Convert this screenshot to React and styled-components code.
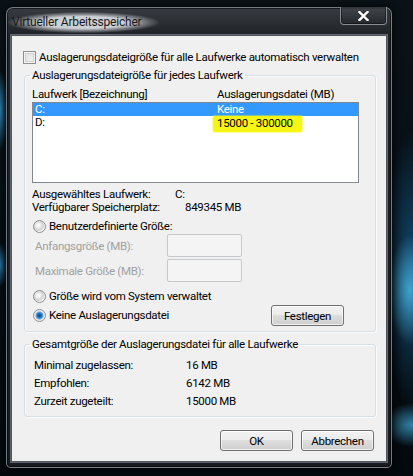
import React from 'react';
import styled, { createGlobalStyle } from 'styled-components';

const GlobalStyle = createGlobalStyle`
  html, body { margin: 0; padding: 0; }
  body {
    width: 413px;
    height: 476px;
    overflow: hidden;
    font-family: Roboto, "Liberation Sans", sans-serif;
    background:
      radial-gradient(ellipse 22px 55px at 410px 290px, rgba(70,180,225,0.85), rgba(70,180,225,0) 100%),
      radial-gradient(ellipse 30px 22px at 412px 425px, rgba(60,160,205,0.8), rgba(60,160,205,0) 100%),
      radial-gradient(ellipse 28px 140px at 412px 270px, rgba(25,100,150,0.7), rgba(25,100,150,0) 100%),
      radial-gradient(ellipse 8px 40px at 0px 110px, rgba(50,150,210,0.85), rgba(50,150,210,0) 100%),
      radial-gradient(ellipse 8px 22px at 0px 265px, rgba(50,150,210,0.75), rgba(50,150,210,0) 100%),
      linear-gradient(180deg, #0b1217 0%, #061017 40%, #04090d 100%);
  }
`;

const Window = styled.div`
  box-sizing: border-box;
  margin: 7px 0 0 6px;
  width: 386px;
  height: 461px;
  padding: 0 4px 5px 4px;
  display: flex;
  flex-direction: column;
  border: 1px solid rgba(140, 148, 156, 0.8);
  border-radius: 7px 7px 5px 5px;
  background: linear-gradient(180deg, rgba(58, 63, 68, 0.95) 0%, rgba(32, 36, 40, 0.95) 28px, rgba(24, 28, 32, 0.95) 100%);
  box-shadow: inset 0 0 0 1px rgba(0, 0, 0, 0.55), 0 0 8px rgba(0, 0, 0, 0.9);
`;

const TitleBar = styled.div`
  height: 27px;
  display: flex;
  justify-content: space-between;
  align-items: flex-start;
`;

const Title = styled.span`
  margin: 4px 0 0 -3px;
  padding: 2px 18px 3px 4px;
  font-size: 12px;
  letter-spacing: -0.2px;
  line-height: 16px;
  color: #1a1a1a;
  background: radial-gradient(ellipse at 50% 50%, rgba(222, 226, 230, 0.9) 40%, rgba(222, 226, 230, 0) 72%);
`;

const CloseButton = styled.div`
  box-sizing: border-box;
  width: 47px;
  height: 18px;
  margin-top: -1px;
  display: flex;
  align-items: center;
  justify-content: center;
  border: 1px solid rgba(150, 156, 162, 0.85);
  border-top: none;
  border-radius: 0 0 4px 4px;
  background: linear-gradient(180deg, rgba(70, 75, 80, 0.7), rgba(35, 40, 45, 0.7));
  box-shadow: inset 0 0 0 1px rgba(0, 0, 0, 0.4);
`;

const Client = styled.div`
  flex: 1;
  display: flex;
  flex-direction: column;
  padding: 0 10px 0 12px;
  background: #f0f0f0;
  border: 1px solid #50565c;
  box-shadow: 0 0 0 1px rgba(180, 190, 200, 0.45);
  font-size: 11.5px;
  letter-spacing: -0.3px;
  color: #000;
`;

const CheckRow = styled.label`
  display: flex;
  align-items: center;
  height: 13px;
  margin: 15px 0 0 -1px;
  line-height: 13px;
  white-space: nowrap;
`;

const CheckBox = styled.span`
  box-sizing: border-box;
  flex: none;
  width: 13px;
  height: 13px;
  border: 1px solid #8e8f8f;
  background: linear-gradient(135deg, #dcdcdc 0%, #f6f6f6 100%);
  box-shadow: inset 0 0 0 1px #f4f4f4, inset 0 0 0 2px #d0d0d0;
  margin-right: 3px;
`;

const Group = styled.fieldset`
  margin: ${(p) => p.$top}px 0 0 0;
  padding: 0;
  min-width: 0;
  border: 1px solid #d5dfe5;
  border-radius: 3px;
  box-shadow: inset 1px 1px 0 #fbfbfb, 1px 1px 0 #fbfbfb;
`;

const Legend = styled.legend`
  margin-left: 5px;
  padding: 0 2px;
  line-height: 14px;
  white-space: nowrap;
`;

const GroupBody = styled.div`
  display: flex;
  flex-direction: column;
  padding: ${(p) => p.$pad};
  white-space: nowrap;
`;

const HeaderRow = styled.div`
  display: grid;
  grid-template-columns: 185px 1fr;
  line-height: 14px;
`;

const ListBox = styled.div`
  box-sizing: border-box;
  height: 81px;
  margin-top: 1px;
  border: 1px solid #828790;
  background: #fff;
`;

const ListRow = styled.div`
  display: grid;
  grid-template-columns: 182px 1fr;
  height: 13px;
  line-height: 13px;
  padding-left: 2px;
  background: ${(p) => (p.$selected ? '#3399ff' : 'transparent')};
  color: ${(p) => (p.$selected ? '#fff' : '#000')};
`;

const Marker = styled.span`
  display: inline-block;
  justify-self: start;
  margin-left: -4px;
  padding: 1px 9px 2px 4px;
  background: #f6f614;
  border-radius: 2px;
  box-shadow: 0 0 1px 1px rgba(246, 246, 20, 0.45);
`;

const InfoRow = styled.div`
  display: grid;
  grid-template-columns: 143px 1fr;
  line-height: 13px;
  margin-top: ${(p) => p.$top || 0}px;
`;

const InfoValue = styled.span`
  padding-left: ${(p) => p.$shift || 0}px;
`;

const RadioRow = styled.label`
  display: flex;
  align-items: center;
  height: ${(p) => p.$height || 13}px;
  margin: ${(p) => p.$top}px 0 0 1px;
  line-height: 13px;
`;

const Radio = styled.span`
  box-sizing: border-box;
  flex: none;
  width: 13px;
  height: 13px;
  margin-right: 3px;
  border-radius: 50%;
  border: 1px solid #8e8f8f;
  background: ${(p) =>
    p.$checked
      ? 'radial-gradient(circle at 50% 50%, #0e4a8c 0, #2a78c2 2.5px, #6fb2e8 3.6px, #e4e4e4 4.4px, #f5f5f5 6px)'
      : 'radial-gradient(circle at 40% 40%, #ffffff 0, #e6e6e6 3px, #cfcfcf 5px, #f3f3f3 6px)'};
`;

const SizeRow = styled.div`
  display: grid;
  grid-template-columns: 132px 75px;
  align-items: center;
  height: 23px;
  margin-top: ${(p) => p.$top}px;
  padding-left: 3px;
  color: #a0a0a0;
`;

const SizeInput = styled.div`
  box-sizing: border-box;
  height: 23px;
  border: 1px solid #c5c9cc;
  border-radius: 2px;
  background: #f4f4f4;
`;

const Spacer = styled.span`
  flex: 1;
`;

const Button = styled.button`
  box-sizing: border-box;
  width: 73px;
  height: 21px;
  padding: 0;
  margin-right: ${(p) => p.$right || 0}px;
  font-family: inherit;
  font-size: inherit;
  letter-spacing: inherit;
  color: #000;
  border: 1px solid #707070;
  border-radius: 3px;
  background: linear-gradient(180deg, #f2f2f2 0%, #ebebeb 50%, #dddddd 50%, #cfcfcf 100%);
  box-shadow: inset 0 0 0 1px rgba(255, 255, 255, 0.65);
`;

const TotalRow = styled.div`
  display: grid;
  grid-template-columns: 152px 1fr;
  height: 18px;
  line-height: 18px;
`;

const ButtonBar = styled.div`
  display: flex;
  justify-content: flex-end;
  gap: 8px;
  margin: 13px 2px 0 0;
`;

const totals = [
  ['Minimal zugelassen:', '16 MB'],
  ['Empfohlen:', '6142 MB'],
  ['Zurzeit zugeteilt:', '15000 MB'],
];

export default function App() {
  return (
    <>
      <GlobalStyle />
      <Window>
        <TitleBar>
          <Title>Virtueller Arbeitsspeicher</Title>
          <CloseButton>
            <svg width="11" height="10" viewBox="0 0 11 10">
              <path d="M1.5 1 L9.5 9 M9.5 1 L1.5 9" stroke="#2a2e33" strokeWidth="4" strokeLinecap="square" />
              <path d="M1.5 1 L9.5 9 M9.5 1 L1.5 9" stroke="#ffffff" strokeWidth="2.4" strokeLinecap="square" />
            </svg>
          </CloseButton>
        </TitleBar>
        <Client>
          <CheckRow>
            <CheckBox />
            Auslagerungsdateigröße für alle Laufwerke automatisch verwalten
          </CheckRow>

          <Group $top={4}>
            <Legend>Auslagerungsdateigröße für jedes Laufwerk</Legend>
            <GroupBody $pad="5px 16px 5px 7px">
              <HeaderRow>
                <span>Laufwerk [Bezeichnung]</span>
                <span>Auslagerungsdatei (MB)</span>
              </HeaderRow>
              <ListBox>
                <ListRow $selected>
                  <span>C:</span>
                  <span>Keine</span>
                </ListRow>
                <ListRow>
                  <span>D:</span>
                  <Marker>15000 - 300000</Marker>
                </ListRow>
              </ListBox>

              <InfoRow $top={5}>
                <span>Ausgewähltes Laufwerk:</span>
                <InfoValue>C:</InfoValue>
              </InfoRow>
              <InfoRow>
                <span>Verfügbarer Speicherplatz:</span>
                <InfoValue $shift={10}>849345 MB</InfoValue>
              </InfoRow>

              <RadioRow $top={6}>
                <Radio />
                Benutzerdefinierte Größe:
              </RadioRow>
              <SizeRow $top={1}>
                <span>Anfangsgröße (MB):</span>
                <SizeInput />
              </SizeRow>
              <SizeRow $top={2}>
                <span>Maximale Größe (MB):</span>
                <SizeInput />
              </SizeRow>
              <RadioRow $top={8}>
                <Radio />
                Größe wird vom System verwaltet
              </RadioRow>
              <RadioRow $top={2} $height={21}>
                <Radio $checked />
                Keine Auslagerungsdatei
                <Spacer />
                <Button type="button" $right={15}>Festlegen</Button>
              </RadioRow>
            </GroupBody>
          </Group>

          <Group $top={5}>
            <Legend>Gesamtgröße der Auslagerungsdatei für alle Laufwerke</Legend>
            <GroupBody $pad="5px 16px 6px 9px">
              {totals.map(([label, value]) => (
                <TotalRow key={label}>
                  <span>{label}</span>
                  <span>{value}</span>
                </TotalRow>
              ))}
            </GroupBody>
          </Group>

          <ButtonBar>
            <Button type="button">OK</Button>
            <Button type="button">Abbrechen</Button>
          </ButtonBar>
        </Client>
      </Window>
    </>
  );
}
